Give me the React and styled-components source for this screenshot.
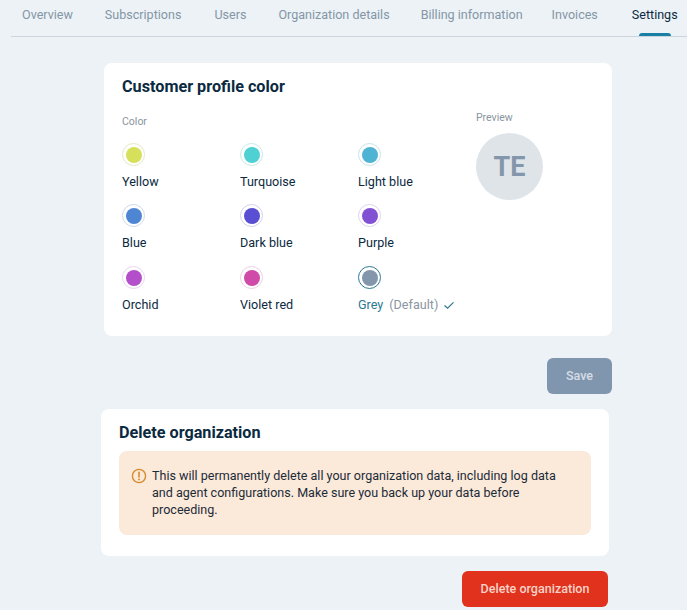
import React from 'react';
import styled, { createGlobalStyle } from 'styled-components';

const colors = [
  { name: 'Yellow', fill: '#d6e05a', ring: '#e4e8c4' },
  { name: 'Turquoise', fill: '#4fd0d3', ring: '#c6e9ea' },
  { name: 'Light blue', fill: '#4fb3d3', ring: '#c6e3ec' },
  { name: 'Blue', fill: '#4f86d3', ring: '#ccdaec' },
  { name: 'Dark blue', fill: '#5a4fd3', ring: '#d4d2ec' },
  { name: 'Purple', fill: '#8150d3', ring: '#e0d2ec' },
  { name: 'Orchid', fill: '#b34fcb', ring: '#ead4f0' },
  { name: 'Violet red', fill: '#d04aa8', ring: '#ecd2e4' },
  { name: 'Grey', fill: '#8496ab', ring: '#2b7a90', selected: true },
];

const tabs = [
  { label: 'Overview', offset: 0 },
  { label: 'Subscriptions', offset: 0 },
  { label: 'Users', offset: 1 },
  { label: 'Organization details', offset: 0 },
  { label: 'Billing information', offset: -1 },
  { label: 'Invoices', offset: -3 },
  { label: 'Settings', offset: 2 },
];

const App = () => {
  return (
    <Page>
      <GlobalStyle />
      <Tabs>
        {tabs.map((tab) => (
          <Tab key={tab.label} offset={tab.offset} active={tab.label === 'Settings'}>{tab.label}</Tab>
        ))}
      </Tabs>

      <ProfileSection>
        <ProfileCard>
          <CardTitle>Customer profile color</CardTitle>
          <ProfileBody>
            <div>
              <SmallLabel>Color</SmallLabel>
              <ColorGrid>
                {colors.map((color) => (
                  <ColorOption key={color.name}>
                    <Swatch fill={color.fill} ring={color.ring} selected={color.selected} />
                    <ColorName selected={color.selected}>
                      {color.name}
                      {color.selected && (
                        <>
                          <DefaultNote>(Default)</DefaultNote>
                          <CheckIcon viewBox="0 0 12 12">
                            <path d="M1.5 6.5 L4.6 9.2 L10.5 3.4" fill="none" stroke="#2b7a90" strokeWidth="1.2" />
                          </CheckIcon>
                        </>
                      )}
                    </ColorName>
                  </ColorOption>
                ))}
              </ColorGrid>
            </div>
            <PreviewColumn>
              <SmallLabel>Preview</SmallLabel>
              <Avatar>TE</Avatar>
            </PreviewColumn>
          </ProfileBody>
        </ProfileCard>
        <ButtonRow>
          <SaveButton type="button">Save</SaveButton>
        </ButtonRow>
      </ProfileSection>

      <DeleteSection>
        <DeleteCard>
          <CardTitle>Delete organization</CardTitle>
          <Warning>
            <WarningIcon viewBox="0 0 16 16">
              <circle cx="8" cy="8" r="6.6" fill="none" stroke="#d98a2b" strokeWidth="1.4" />
              <path d="M8 4.2 V9" stroke="#d98a2b" strokeWidth="1.6" strokeLinecap="round" />
              <circle cx="8" cy="11.4" r="0.95" fill="#d98a2b" />
            </WarningIcon>
            <p>
              This will permanently delete all your organization data, including log data and agent
              configurations. Make sure you back up your data before proceeding.
            </p>
          </Warning>
        </DeleteCard>
        <ButtonRow>
          <DeleteButton type="button">Delete organization</DeleteButton>
        </ButtonRow>
      </DeleteSection>
    </Page>
  );
};

export default App;

const GlobalStyle = createGlobalStyle`
  html, body {
    margin: 0;
    padding: 0;
    background: #ecf2f6;
    overflow: hidden;
  }
  * {
    box-sizing: border-box;
  }
`;

const Page = styled.div`
  width: 687px;
  height: 610px;
  overflow: hidden;
  background: #ecf2f6;
  font-family: Roboto, 'Liberation Sans', sans-serif;
  color: #0b2a3f;
`;

const Tabs = styled.nav`
  display: flex;
  gap: 32px;
  height: 37px;
  margin-left: 11px;
  padding-left: 11px;
  border-bottom: 1px solid #ccd5dd;
`;

const Tab = styled.a`
  position: relative;
  margin-left: ${(props) => props.offset}px;
  font-size: 12.55px;
  line-height: 29px;
  white-space: nowrap;
  color: ${(props) => (props.active ? '#0b2a3f' : '#8496a6')};

  &::after {
    content: '';
    display: ${(props) => (props.active ? 'block' : 'none')};
    position: absolute;
    left: 7px;
    right: 7px;
    bottom: 0;
    height: 3px;
    border-radius: 3px 3px 0 0;
    background: #1a7fa5;
  }
`;

const ProfileSection = styled.section`
  width: 508px;
  margin: 26px 0 0 104px;
`;

const DeleteSection = styled.section`
  width: 508px;
  margin: 15px 0 0 101px;
`;

const Card = styled.div`
  background: #fff;
  border-radius: 8px;
`;

const ProfileCard = styled(Card)`
  height: 273px;
  padding: 14px 18px;
`;

const DeleteCard = styled(Card)`
  height: 147px;
  padding: 14px 18px;
`;

const CardTitle = styled.h2`
  margin: 0;
  font-size: 16.2px;
  font-weight: 700;
  line-height: 19px;
  color: #0b2a3f;
`;

const ProfileBody = styled.div`
  display: flex;
  margin-top: 19px;
`;

const SmallLabel = styled.div`
  font-size: 10.5px;
  line-height: 13px;
  color: #8a959f;
`;

const ColorGrid = styled.div`
  display: grid;
  grid-template-columns: repeat(3, 118px);
  grid-template-rows: 61px 62px 62px;
  margin-top: 15px;
`;

const ColorOption = styled.div`
  display: flex;
  flex-direction: column;
  align-items: flex-start;
`;

const Swatch = styled.span`
  width: 23px;
  height: 23px;
  padding: 2.5px;
  border-radius: 50%;
  border: ${(props) => (props.selected ? '1.5px' : '1px')} solid ${(props) => props.ring};
  background: ${(props) => props.fill} content-box;
`;

const ColorName = styled.div`
  display: flex;
  align-items: center;
  margin-top: 8px;
  font-size: 12.6px;
  line-height: 15px;
  white-space: nowrap;
  color: ${(props) => (props.selected ? '#2b7a90' : '#0b2a3f')};
`;

const DefaultNote = styled.span`
  margin-left: 6px;
  color: #8a959f;
`;

const CheckIcon = styled.svg`
  width: 12px;
  height: 12px;
  margin-left: 5px;
`;

const PreviewColumn = styled.div`
  margin-top: -4px;
`;

const Avatar = styled.div`
  display: flex;
  align-items: center;
  justify-content: center;
  width: 67px;
  height: 67px;
  margin-top: 9px;
  border-radius: 50%;
  background: #dfe4e9;
  color: #8496ab;
  font-size: 27px;
  font-weight: 700;
`;

const ButtonRow = styled.div`
  display: flex;
  justify-content: flex-end;
`;

const Button = styled.button`
  height: 36px;
  padding: 0 0 2px;
  border: none;
  border-radius: 6px;
  font-family: inherit;
  font-size: 12.55px;
  font-weight: 500;
`;

const SaveButton = styled(Button)`
  width: 65px;
  margin-top: 22px;
  background: #8096ae;
  color: #d5dde6;
`;

const DeleteButton = styled(Button)`
  width: 146px;
  margin: 15px 1px 0 0;
  background: #e0321c;
  color: #f8d2c8;
`;

const Warning = styled.div`
  display: flex;
  align-items: flex-start;
  gap: 5px;
  height: 84px;
  margin-top: 9px;
  padding: 16px 12px;
  border-radius: 8px;
  background: #fbe9da;
  font-size: 12.55px;
  line-height: 17px;
  color: #1c2b38;

  p {
    margin: 0;
    width: 420px;
  }
`;

const WarningIcon = styled.svg`
  flex: none;
  width: 16px;
  height: 16px;
  margin-top: 1px;
`;
